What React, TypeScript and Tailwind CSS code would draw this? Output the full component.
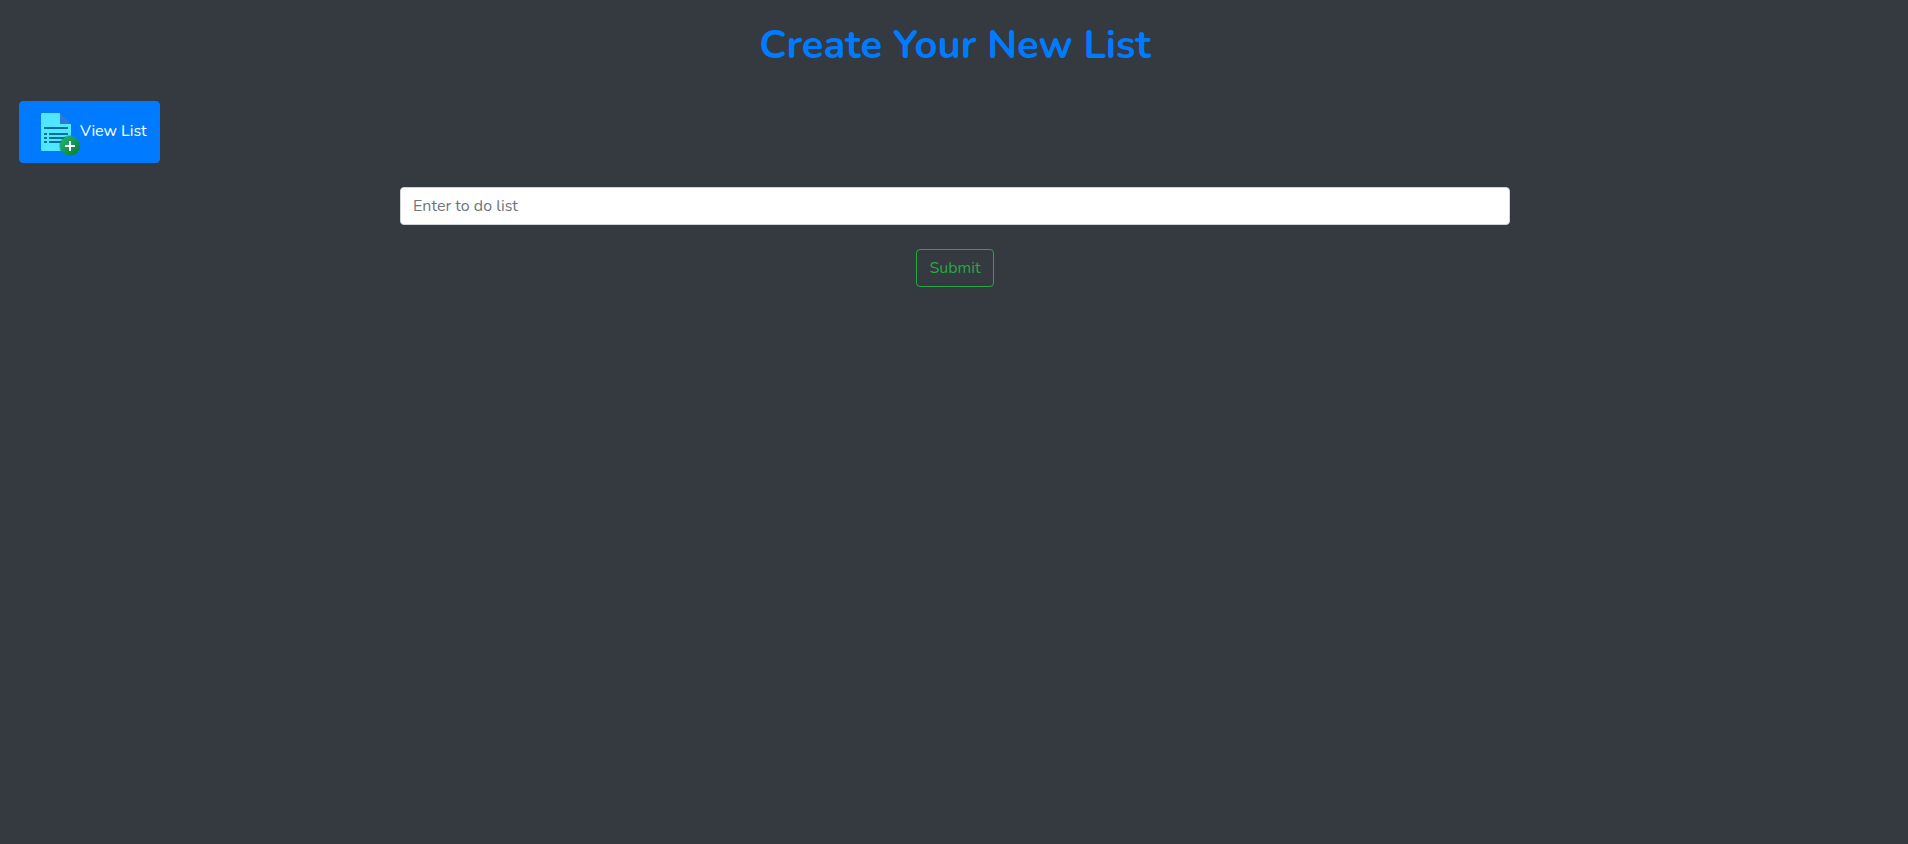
import { useState } from "react";

function AddListIcon() {
  return (
    <svg viewBox="0 0 48 48" className="inline-block size-12 align-middle" aria-hidden="true">
      <defs>
        <linearGradient id="badge" x1="31" y1="31" x2="45" y2="45" gradientUnits="userSpaceOnUse">
          <stop offset="0" stopColor="#21ad64" />
          <stop offset="1" stopColor="#088242" />
        </linearGradient>
        <linearGradient id="fold" x1="28" y1="15" x2="34" y2="9" gradientUnits="userSpaceOnUse">
          <stop offset="0" stopColor="#3079d6" />
          <stop offset="1" stopColor="#297cd2" />
        </linearGradient>
        <clipPath id="sheet">
          <path d="M9 6a1 1 0 0 1 1-1h18l11 11v26a1 1 0 0 1-1 1H10a1 1 0 0 1-1-1z" />
        </clipPath>
        <filter id="shade" x="-20%" y="-20%" width="140%" height="140%">
          <feGaussianBlur stdDeviation="0.5" />
        </filter>
      </defs>
      <g clipPath="url(#sheet)">
        <path fill="#50e6ff" d="M9 5h19v11h11v27H9z" />
        <path
          fill="#057093"
          d="M12 19h24v2H12zM12 25h3v2h-3zM17 25h19v2H17zM12 29h3v2h-3zM17 29h19v2H17zM12 33h3v2h-3zM17 33h19v2H17z"
        />
        <circle cx="38" cy="38" r="10.8" fill="#057093" opacity="0.45" filter="url(#shade)" />
      </g>
      <path fill="url(#fold)" d="M28 5l11 11H29a1 1 0 0 1-1-1z" />
      <circle cx="38" cy="38" r="10" fill="url(#badge)" />
      <path fill="#fff" d="M37 33h2v4h4v2h-4v4h-2v-4h-4v-2h4z" />
    </svg>
  );
}

export default function App() {
  const [item, setItem] = useState("");

  return (
    <main className="flex min-h-screen flex-col bg-[#343a40] pl-0.5 font-['Nunito','Lato',sans-serif] text-base">
      <h1 className="pt-5 text-center text-[40px] leading-[50px] font-bold text-[#007bff]">
        Create Your New List
      </h1>
      <a
        href="#lists"
        className="mt-[31px] ml-[17px] self-start rounded border border-[#007bff] bg-[#007bff] px-3 py-1.5 whitespace-nowrap text-white"
      >
        <AddListIcon />
        <span>View List</span>
      </a>
      <form
        className="mx-auto flex w-full max-w-[1140px] flex-col items-center gap-6 px-[15px] pt-6"
        onSubmit={(event) => event.preventDefault()}
      >
        <input
          type="text"
          aria-label="To do list"
          placeholder="Enter to do list"
          value={item}
          onChange={(event) => setItem(event.target.value)}
          className="h-[38px] w-full rounded border border-[#ced4da] bg-white px-3 text-[#495057] placeholder:text-[#6c757d]"
        />
        <button
          type="submit"
          className="h-[38px] rounded border border-[#28a745] px-3 text-[#28a745]"
        >
          Submit
        </button>
      </form>
    </main>
  );
}
